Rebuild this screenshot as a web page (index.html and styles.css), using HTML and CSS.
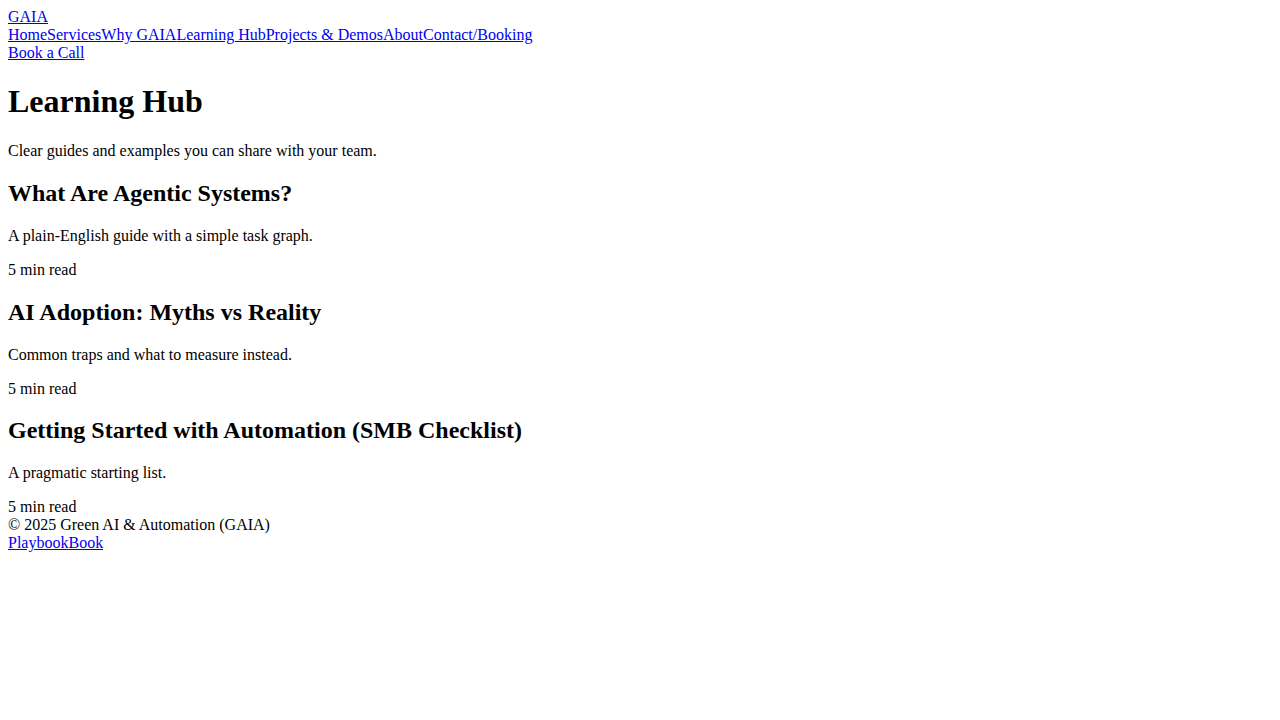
FILE: index.html
```html
<!DOCTYPE html>
<html lang="en">
<head>
<meta charset="utf-8">
<title>Learning Hub — GAIA</title>
<link rel="stylesheet" href="styles.css">
</head>
<body class="page">
<header class="site-header">
<div class="brand"><a href="#">GAIA</a></div>
<nav class="nav"><a href="#">Home</a><a href="#">Services</a><a href="#">Why GAIA</a><a href="#">Learning Hub</a><a href="#">Projects &amp; Demos</a><a href="#">About</a><a href="#">Contact/Booking</a></nav>
<div class="cta"><a href="#">Book a Call</a></div>
</header>
<main class="main">
<h1 class="title">Learning Hub</h1>
<p class="lead">Clear guides and examples you can share with your team.</p>
<article class="card">
<h2 class="card-title">What Are Agentic Systems?</h2>
<p class="card-desc">A plain-English guide with a simple task graph.</p>
<div class="meta">5 min read</div>
</article>
<article class="card">
<h2 class="card-title">AI Adoption: Myths vs Reality</h2>
<p class="card-desc">Common traps and what to measure instead.</p>
<div class="meta">5 min read</div>
</article>
<article class="card">
<h2 class="card-title">Getting Started with Automation (SMB Checklist)</h2>
<p class="card-desc">A pragmatic starting list.</p>
<div class="meta">5 min read</div>
</article>
</main>
<footer class="site-footer">
<div class="copy">© 2025 Green AI &amp; Automation (GAIA)</div>
<div class="footer-links"><a href="#">Playbook</a><a href="#">Book</a></div>
</footer>
</body>
</html>
```

FILE: styles.css
```css
.page {
  font-family: "Liberation Serif", "Times New Roman", serif;
  font-size: 16px;
  color: #000;
  background: #fff;
}
.page a {
  color: #0000ee;
}
```
